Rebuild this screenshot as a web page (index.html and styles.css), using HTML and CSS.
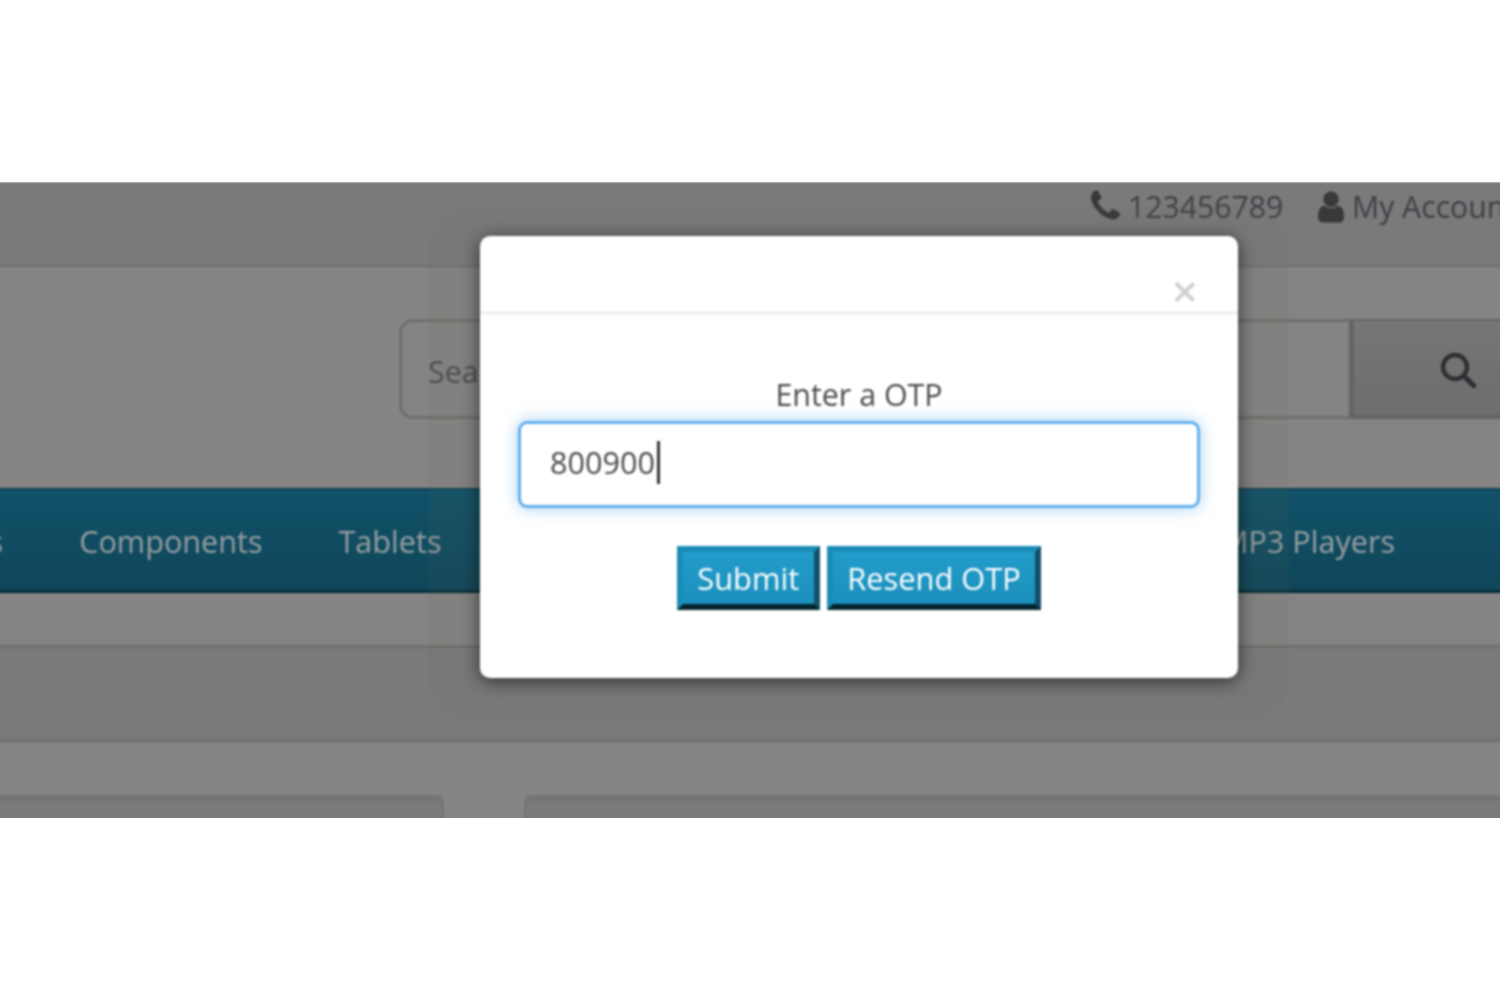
FILE: index.html
```html
<!DOCTYPE html>
<html lang="en">
<head>
<meta charset="utf-8">
<title>Enter a OTP</title>
<link rel="stylesheet" href="styles.css">
</head>
<body>
<div class="shot">
  <div class="canvas">
    <header class="topbar">
      <span class="contact">
        <svg class="icon-phone" viewBox="192 128 1408 1408"><path d="M1600 1240q0 27-10 70.5t-21 68.5q-21 50-122 106-94 51-186 51-27 0-53-3.5t-57.5-12.5-47-14.5-55.5-20.5-49-18q-98-35-175-83-127-79-264-216t-216-264q-48-77-83-175-3-9-18-49t-20.5-55.5-14.5-47-12.5-57.5-3.5-53q0-92 51-186 56-101 106-122 25-11 68.5-21t70.5-10q14 0 21 3 18 6 53 76 11 19 30 54t35 63.5 31 53.5q3 4 17.5 25t21.5 35.5 7 28.5q0 20-28.5 50t-62 55-62 53-28.5 46q0 9 5 22.5t8.5 20.5 14 24 11.5 19q76 137 174 235t235 174q2 1 19 11.5t24 14 20.5 8.5 22.5 5q18 0 46-28.5t53-62 55-62 50-28.5q14 0 28.5 7t35.5 21.5 25 17.5q25 15 53.5 31t63.5 35 54 30q70 35 76 53 3 7 3 21z"/></svg>
        <span>123456789</span>
      </span>
      <span class="account">
        <svg class="icon-user" viewBox="256 128 1280 1536"><path d="M1536 1399q0 109-62.5 187t-150.5 78h-854q-88 0-150.5-78t-62.5-187q0-85 8.5-160.5t31.5-152 58.5-131 94-89 134.5-34.5q131 128 313 128t313-128q76 0 134.5 34.5t94 89 58.5 131 31.5 152 8.5 160.5zm-256-887q0 159-112.5 271.5t-271.5 112.5-271.5-112.5-112.5-271.5 112.5-271.5 271.5-112.5 271.5 112.5 112.5 271.5z"/></svg>
        <span>My Account</span>
      </span>
    </header>

    <section class="searchrow">
      <div class="search">
        <div class="search-field">Search</div>
        <div class="search-btn">
          <svg class="icon-search" viewBox="0 0 36 36"><circle cx="15" cy="15" r="12" fill="none" stroke-width="4.4"/><path d="M24 24l10 10" fill="none" stroke-width="5" stroke-linecap="round"/></svg>
        </div>
      </div>
    </section>

    <nav class="mainnav">
      <span class="nav-item nav-first">Laptops &amp; Notebooks</span>
      <span class="nav-item">Components</span>
      <span class="nav-item">Tablets</span>
      <span class="nav-item nav-last">MP3 Players</span>
    </nav>

    <div class="gap-row"></div>
    <div class="crumb-row"></div>
    <div class="panels">
      <div class="panel panel-left"></div>
      <div class="panel panel-right"></div>
    </div>

    <div class="modal-halo"></div>
    <div class="modal">
      <div class="modal-head"><span class="close">×</span></div>
      <form class="modal-body">
        <div class="otp-label">Enter a OTP</div>
        <div class="otp-input"><span>800900</span><span class="caret"></span></div>
        <div class="actions">
          <button type="button" class="btn">Submit</button>
          <button type="button" class="btn">Resend OTP</button>
        </div>
      </form>
    </div>
  </div>
</div>
</body>
</html>
```
FILE: styles.css
```css
* { box-sizing: border-box; }
html, body { margin: 0; background: #fff; }
body { padding-top: 182px; height: 1000px; overflow: hidden; font-family: "Open Sans", "Liberation Sans", sans-serif; font-size: 30.4px; }

.shot {
  height: 636px;
  overflow: hidden;
}
.canvas {
  position: relative;
  width: 1512px;
  height: 660px;
  margin-left: -6px;
  background: #858384;
  filter: blur(0.9px);
}

.topbar {
  display: flex;
  height: 85px;
  padding-left: 1097px;
  background: #7b797a;
  border-bottom: 2px solid #6f706d;
  color: #3d4046;
  font-size: 30.2px;
  white-space: nowrap;
}
.contact, .account { display: flex; gap: 8px; height: 48px; align-items: center; flex: none; }
.contact { width: 227px; }
.icon-phone { width: 29px; height: 30px; fill: #363737; margin-top: -2px; }
.icon-user { width: 26px; height: 34px; fill: #393939; margin-top: 2px; }

.searchrow { height: 221px; padding: 52px 0 0 405px; }
.search { display: flex; width: 1200px; height: 100px; }
.search-field {
  width: 950px;
  padding: 28px 0 0 26px;
  line-height: 44px;
  border: 3px solid #706f6d;
  border-right: 0;
  border-radius: 14px 0 0 14px;
  color: #4c4c4c;
}
.search-btn {
  width: 250px;
  padding: 31px 0 0 86px;
  background: linear-gradient(#777775, #6f6d6e);
  border-left: 5px solid #646462;
  border-top: 2px solid #646462;
  border-bottom: 4px solid #646462;
}
.icon-search { display: block; width: 36px; height: 36px; stroke: #2b2e33; }

.mainnav {
  display: flex;
  gap: 76px;
  height: 105px;
  padding-top: 27px;
  line-height: 48px;
  font-size: 30.6px;
  background: linear-gradient(#115269, #10465a);
  border-top: 2px solid #0e4050;
  border-bottom: 3px solid #042b39;
  color: #9a9fa2;
  white-space: nowrap;
}
.nav-item { flex: none; }
.nav-first { margin-left: -299px; }
.nav-last { margin-left: auto; margin-right: 111px; }

.gap-row { height: 52px; }
.crumb-row { height: 97px; background: #7b797a; border-top: 3px solid #6f706d; border-bottom: 3px solid #6f706d; }
.panels { display: flex; gap: 80px; padding-top: 53px; }
.panel {
  height: 60px;
  background: #7b797a;
  border-top: 6px solid #757573;
}
.panel-left { flex: 0 0 450px; border-right: 2px solid #757573; border-radius: 0 8px 0 0; }
.panel-right { flex: 0 0 1000px; border-left: 2px solid #757573; border-radius: 8px 0 0 0; }

.modal-halo {
  position: absolute;
  left: 435px;
  top: 25px;
  width: 860px;
  height: 515px;
  background: rgba(95, 110, 85, 0.09);
  border-radius: 44px;
}
.modal {
  position: absolute;
  left: 486px;
  top: 54px;
  width: 758px;
  height: 442px;
  background: #fff;
  border-radius: 10px;
  box-shadow: 0 3px 18px rgba(0, 0, 0, 0.62);
}
.modal-head {
  display: flex;
  justify-content: flex-end;
  height: 78px;
  padding: 32px 40px 0 0;
  border-bottom: 2px solid #e6e6e6;
}
.close { font-size: 46px; line-height: 45px; font-weight: 600; color: #cfcfcf; }
.modal-body { padding: 59px 38px 0; text-align: center; color: #555; }
.otp-label { height: 48px; line-height: 44px; color: #4a4a4a; }
.otp-input {
  display: flex;
  align-items: center;
  height: 87px;
  padding: 0 0 5px 29px;
  background: #fff;
  border: 3px solid #62aeee;
  border-radius: 9px;
  box-shadow: 0 0 16px rgba(102, 175, 233, 0.6);
  font-size: 30.6px;
  color: #4a4a4a;
}
.caret { width: 3px; height: 43px; margin-left: 2px; background: #333; }
.actions { display: flex; justify-content: center; gap: 7px; margin-top: 38px; }
.btn {
  height: 64px;
  padding: 0 14.5px;
  font: inherit;
  font-size: 30.8px;
  line-height: 40px;
  color: #fff;
  background: linear-gradient(#229ccb, #1c8fbb);
  border-style: solid;
  border-width: 6px;
  border-color: #1a8cb6 #124f66 #03242d #1a8cb6;
}
```
